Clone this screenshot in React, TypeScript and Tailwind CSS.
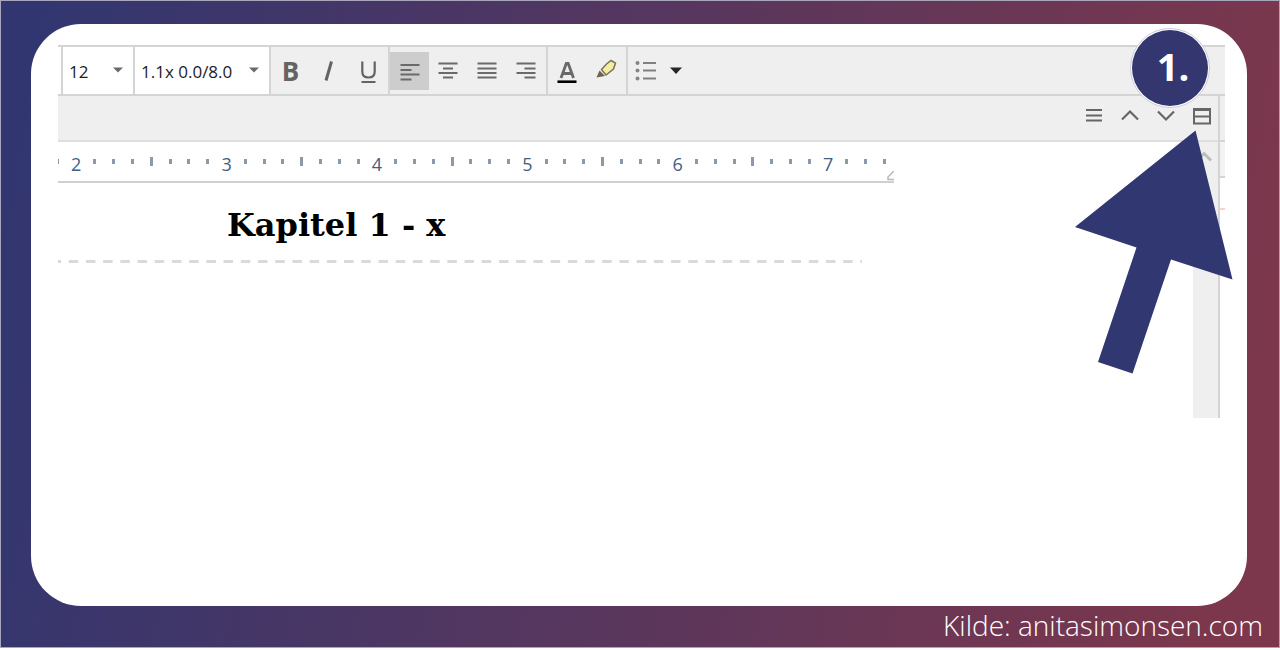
import React from "react";

type IconProps = { d: string; className?: string; width?: number };

function LineIcon({ d, className = "", width = 2 }: IconProps) {
  return (
    <svg
      aria-hidden="true"
      viewBox="0 0 24 24"
      className={`size-6 ${className}`}
      fill="none"
      stroke="currentColor"
      strokeWidth={width}
    >
      <path d={d} />
    </svg>
  );
}

function ToolButton({
  label,
  active = false,
  children,
}: {
  label: string;
  active?: boolean;
  children: React.ReactNode;
}) {
  return (
    <button
      type="button"
      aria-label={label}
      aria-pressed={active}
      className={`flex h-[38px] w-[39px] items-center justify-center ${active ? "bg-[#cdcdcd]" : ""}`}
    >
      {children}
    </button>
  );
}

function Group({ children, className = "" }: { children: React.ReactNode; className?: string }) {
  return (
    <div className={`flex items-center border-l-2 border-[#d4d4d4] ${className}`}>{children}</div>
  );
}

function Dropdown({ label, value, className }: { label: string; value: string; className: string }) {
  return (
    <div className={`relative border-l-2 border-[#d4d4d4] bg-white ${className}`}>
      <select
        aria-label={label}
        defaultValue={value}
        className="h-full w-full appearance-none bg-transparent pt-0.5 pr-6 pl-1.5 text-[17px] text-[#1c1c28] outline-none"
      >
        <option>{value}</option>
      </select>
      <svg
        aria-hidden="true"
        viewBox="0 0 10 6"
        className="pointer-events-none absolute top-5 right-2.5 h-1.5 w-2.5 fill-[#6b6b6b]"
      >
        <path d="M0 .5h10L5 5.5z" />
      </svg>
    </div>
  );
}

const alignments = [
  { label: "Align left", d: "M2.500 6h19M2.500 11h11M2.500 15.500h19M2.500 20.500h11" },
  { label: "Align center", d: "M1.500 4.500h19M6 9.500h10M1.500 14h19M6 18.500h10" },
  { label: "Justify", d: "M1.500 4.500h19M1.500 9.500h19M1.500 14h19M1.500 18.500h19" },
  { label: "Align right", d: "M1.500 4.500h19M9.500 9.500h11M1.500 14h19M9.500 18.500h11" },
];

function Toolbar() {
  return (
    <div className="h-[51px] border-y-2 border-[#d4d4d4] bg-white pl-[3px]">
      <div className="flex h-full bg-[#efefef]">
        <Dropdown label="Font size" value="12" className="w-[72px]" />
        <Dropdown label="Line spacing" value="1.1x 0.0/8.0" className="w-[136px]" />
        <Group className="text-[#636363]">
          <ToolButton label="Bold">
            <span className="text-[26px] leading-9 font-bold">B</span>
          </ToolButton>
          <ToolButton label="Italic">
            <svg aria-hidden="true" viewBox="0 0 24 24" className="size-6" stroke="currentColor" strokeWidth="3">
              <path d="M13.500 2.500L8 21.500" />
            </svg>
          </ToolButton>
          <ToolButton label="Underline">
            <svg
              aria-hidden="true"
              viewBox="0 0 24 24"
              className="size-6"
              fill="none"
              stroke="currentColor"
              strokeWidth="2.200"
            >
              <path d="M5.300 2.500v10c0 4 2.500 6 6.200 6s6.200-2 6.200-6v-10" />
              <path d="M4.500 23h14" strokeWidth="2" />
            </svg>
          </ToolButton>
        </Group>
        <Group className="text-[#6a6a6a]">
          {alignments.map((a, i) => (
            <ToolButton key={a.label} label={a.label} active={i === 0}>
              <LineIcon d={a.d} width={1.8} />
            </ToolButton>
          ))}
        </Group>
        <Group>
          <ToolButton label="Text color">
            <svg aria-hidden="true" viewBox="0 0 24 24" className="size-6" fill="none">
              <path d="M5 19L10.300 4.500h1.900L17.500 19M7.500 14.500h7.500" stroke="#696969" strokeWidth="2.800" />
              <path d="M1.500 23h19" stroke="#000" strokeWidth="3.200" />
            </svg>
          </ToolButton>
          <ToolButton label="Highlight">
            <svg aria-hidden="true" viewBox="0 0 24 24" className="size-6" stroke="#77745a" strokeWidth="1.500">
              <path d="M16 1.500l4.500 2.500-2 6-7.500 6-4.500-5.500 5-5.500z" fill="#f4efa0" />
              <path d="M4.500 11.500l5.500 5.500L1.500 18.500z" fill="#68654a" stroke="none" />
            </svg>
          </ToolButton>
        </Group>
        <Group className="flex-1 pl-1.5">
          <button type="button" aria-label="List style" className="flex items-center gap-3">
            <svg aria-hidden="true" viewBox="0 0 24 24" className="size-6" fill="none">
              <g fill="#858585">
                <circle cx="3.500" cy="4" r="2" />
                <circle cx="3.500" cy="11.500" r="2" />
                <circle cx="3.500" cy="19.500" r="2" />
              </g>
              <path d="M9 4h13M9 11.500h13M9 19.500h13" stroke="#808080" strokeWidth="1.800" />
            </svg>
            <svg aria-hidden="true" viewBox="0 0 12 7" className="h-[7px] w-3 fill-[#262626]">
              <path d="M0 .5h12L6 7z" />
            </svg>
          </button>
        </Group>
      </div>
    </div>
  );
}

const paneButtons = [
  { label: "Menu", d: "M4 6h16M4 11.500h16M4 16.500h16", width: 1.8 },
  { label: "Previous document", d: "M4 15.500l8-8 8 8", width: 2.2 },
  { label: "Next document", d: "M4 7.500l8 8 8-8", width: 2.2 },
  { label: "Split editor", d: "M4 5h16v14.500H4zM4 6h16M4 12.500h16", width: 2 },
];

function PaneHeader() {
  return (
    <div className="flex h-[46px] justify-end gap-3 border-b-2 border-[#dedede] bg-[#efefef] pt-2 pr-1 text-[#666]">
      {paneButtons.map((b) => (
        <button key={b.label} type="button" aria-label={b.label} className="size-6">
          <LineIcon d={b.d} width={b.width} />
        </button>
      ))}
    </div>
  );
}

function Ruler() {
  return (
    <div className="relative h-[41px] max-w-[836px] overflow-hidden border-b-2 border-[#d0d0d0]">
      <div className="-ml-[10px] flex h-full">
        {Array.from({ length: 45 }, (_, i) => {
          const step = (i + 7) % 8;
          return (
            <div key={i} className="flex min-w-0 flex-1 justify-center">
              {step === 0 ? (
                <span className="pt-2 text-lg leading-7 text-[#435d84]">{2 + (i - 1) / 8}</span>
              ) : step === 4 ? (
                <span className="mt-[15px] h-[9px] w-[3px] bg-[#8d99ab]" />
              ) : (
                <span className="mt-[17px] h-[5px] w-[3px] bg-[#8d99ab]" />
              )}
            </div>
          );
        })}
      </div>
      <svg
        aria-hidden="true"
        viewBox="0 0 8 10"
        className="absolute right-0 bottom-0 h-2.5 w-2"
        fill="none"
        stroke="#b8b8b8"
        strokeWidth="1.500"
      >
        <path d="M8 0L2 6v2.500h6" />
      </svg>
    </div>
  );
}

function Editor() {
  return (
    <div className="flex items-start">
      <div className="flex h-[322px] min-w-0 flex-1 flex-col border-r-2 border-[#d4d4d4]">
        <PaneHeader />
        <div className="flex min-h-0 flex-1">
          <div className="min-w-0 flex-1">
            <Ruler />
            <h1 className="pt-[21px] pl-[169px] font-['DejaVu_Serif',serif] text-[32px] leading-[42px] font-bold text-black">
              Kapitel 1 - x
            </h1>
            <svg aria-hidden="true" className="mt-3.5 h-[3px] w-full max-w-[804px]">
              <line
                x1="0"
                y1="1.500"
                x2="100%"
                y2="1.500"
                stroke="#dadada"
                strokeWidth="3"
                strokeDasharray="9.500 7.710"
                strokeDashoffset="6.500"
              />
            </svg>
          </div>
          <div className="w-[25px] bg-[#efefef] pt-[7px] text-[#bdbdbd]">
            <LineIcon d="M4 11.500l7-7 7 7" width={3} />
          </div>
        </div>
      </div>
      <div className="w-[5px]">
        <div className="h-[46px] border-b-2 border-[#d4d4d4] bg-[#efefef]" />
        <div className="h-9 border-b-2 border-[#d4d4d4] bg-[#f3f3f3]" />
        <div className="h-8 border-b-2 border-[#f9d2cb]" />
      </div>
    </div>
  );
}

function Pointer() {
  return (
    <>
      <svg
        aria-hidden="true"
        viewBox="0 0 158 244"
        className="pointer-events-none absolute top-[106px] right-3.5 h-[244px] w-[158px] fill-[#313770]"
      >
        <path d="M120.500 .5L0 97l61.500 20.500L23 232l34.500 11.500L96 129.500l61.500 20z" />
      </svg>
      <div className="absolute top-1 right-[37px] flex size-20 items-center justify-center rounded-full border border-[#c9cad8] bg-white">
        <div className="flex size-[76px] items-center justify-center rounded-full bg-[#34366f] pb-1 pl-1.5 text-[38px] leading-none font-bold text-white">
          1.
        </div>
      </div>
    </>
  );
}

export default function App() {
  return (
    <div className="min-h-screen bg-white pb-0.5 font-['Open_Sans','Noto_Sans',sans-serif]">
      <div className="flex min-h-[calc(100vh-2px)] flex-col border border-[#a9a5bb] bg-linear-[100deg,#323670_3%,#7c374c_95%]">
        <main className="relative mx-[30px] mt-[23px] mr-8 flex-1 rounded-[50px] bg-white pt-[21px] pr-[22px] pl-[27px]">
          <Toolbar />
          <Editor />
          <Pointer />
        </main>
        <footer className="h-[41px] pr-4 text-right text-[28px] leading-[38px] font-light text-white">
          Kilde: anitasimonsen.com
        </footer>
      </div>
    </div>
  );
}
